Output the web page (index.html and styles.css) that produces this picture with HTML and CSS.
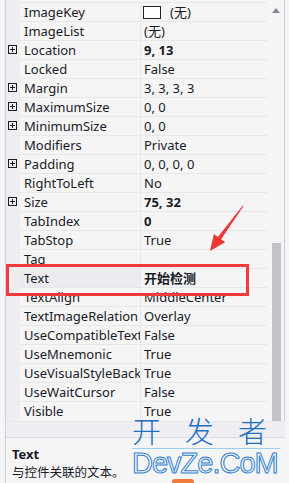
FILE: index.html
```html
<!DOCTYPE html>
<html>
<head>
	<title>属性</title>
	<link rel="stylesheet" href="styles.css">
</head>
<body>
	<div class="sheet">
		<div class="grid">
			<div class="rows">
				<div class="row"><span class="gut"></span><span class="name">ImageKey</span><span class="val"><i class="swatch"></i>(无)</span></div>
				<div class="row"><span class="gut"></span><span class="name">ImageList</span><span class="val">(无)</span></div>
				<div class="row"><span class="gut"><i class="plus"></i></span><span class="name">Location</span><span class="val bold">9, 13</span></div>
				<div class="row"><span class="gut"></span><span class="name">Locked</span><span class="val">False</span></div>
				<div class="row"><span class="gut"><i class="plus"></i></span><span class="name">Margin</span><span class="val">3, 3, 3, 3</span></div>
				<div class="row"><span class="gut"><i class="plus"></i></span><span class="name">MaximumSize</span><span class="val">0, 0</span></div>
				<div class="row"><span class="gut"><i class="plus"></i></span><span class="name">MinimumSize</span><span class="val">0, 0</span></div>
				<div class="row"><span class="gut"></span><span class="name">Modifiers</span><span class="val">Private</span></div>
				<div class="row"><span class="gut"><i class="plus"></i></span><span class="name">Padding</span><span class="val">0, 0, 0, 0</span></div>
				<div class="row"><span class="gut"></span><span class="name">RightToLeft</span><span class="val">No</span></div>
				<div class="row"><span class="gut"><i class="plus"></i></span><span class="name">Size</span><span class="val bold">75, 32</span></div>
				<div class="row"><span class="gut"></span><span class="name">TabIndex</span><span class="val bold">0</span></div>
				<div class="row"><span class="gut"></span><span class="name">TabStop</span><span class="val">True</span></div>
				<div class="row"><span class="gut"></span><span class="name">Tag</span><span class="val"></span></div>
				<div class="row selected"><span class="gut"></span><span class="name">Text</span><span class="val bold">开始检测</span></div>
				<div class="row"><span class="gut"></span><span class="name">TextAlign</span><span class="val">MiddleCenter</span></div>
				<div class="row"><span class="gut"></span><span class="name">TextImageRelation</span><span class="val">Overlay</span></div>
				<div class="row"><span class="gut"></span><span class="name">UseCompatibleTextRendering</span><span class="val">False</span></div>
				<div class="row"><span class="gut"></span><span class="name">UseMnemonic</span><span class="val">True</span></div>
				<div class="row"><span class="gut"></span><span class="name">UseVisualStyleBackColor</span><span class="val">True</span></div>
				<div class="row"><span class="gut"></span><span class="name">UseWaitCursor</span><span class="val">False</span></div>
				<div class="row"><span class="gut"></span><span class="name">Visible</span><span class="val">True</span></div>
			</div>
			<div class="scroll">
				<span class="up"></span>
				<span class="thumb"></span>
			</div>
		</div>
		<div class="split"></div>
		<div class="desc">
			<b>Text</b>
			<p>与控件关联的文本。</p>
		</div>
	</div>

	<!-- annotations drawn over the screenshot -->
	<div class="mark"></div>
	<svg class="arrow" width="289" height="483" viewBox="0 0 289 483">
		<polygon points="243.4,206.3 221.1,239.3 225.1,242.2 210,251 213.9,234 217.9,236.9 242.6,205.7" fill="#f03535"/>
	</svg>
	<div class="wm">
		<div class="wm-cn">开发者</div>
		<div class="wm-en">DevZe.CoM</div>
	</div>
	<span class="stub"></span>
</body>
</html>
```

FILE: styles.css
```css
body{
	margin: 0;
	background: #f5f5f7;
	font-family: "Noto Sans", "Noto Sans CJK SC", sans-serif;
	font-size: 13px;
	color: #1a1b29;
	width: 289px;
	height: 483px;
	overflow: hidden;
	position: relative;
}

.sheet{
	margin-left: 5px;
	width: 279px;
	border-left: 1px solid #cfd0dc;
}

.grid{
	display: flex;
	height: 421px;
}

.rows{
	width: 261px;
	padding-top: 2px;
	box-sizing: border-box;
	background: linear-gradient(to right, #ededf2 14px, #f5f5f5 14px);
	overflow: hidden;
}

.row{
	display: grid;
	grid-template-columns: 14px 121px 126px;
	height: 19px;
}

.gut{
	display: flex;
	align-items: center;
	padding-left: 2px;
}

.plus{
	width: 7px;
	height: 7px;
	border: 1px solid #1e1e1e;
	position: relative;
}
.plus::before{
	content: "";
	position: absolute;
	left: 1px;
	top: 3px;
	width: 5px;
	height: 1px;
	background: #1e1e1e;
}
.plus::after{
	content: "";
	position: absolute;
	left: 3px;
	top: 1px;
	width: 1px;
	height: 5px;
	background: #1e1e1e;
}

.name, .val{
	border-top: 1px solid #e7e7eb;
	line-height: 18px;
	white-space: nowrap;
	overflow: hidden;
}

.name{
	padding-left: 4px;
	border-right: 1px solid #e7e7eb;
}

.val{
	padding-left: 3px;
	display: flex;
	align-items: center;
}

.bold{
	font-weight: bold;
}

.selected .name{
	background: #ececf0;
}

.swatch{
	width: 18px;
	height: 13px;
	border: 1px solid #222;
	background: #fff;
	margin-right: 9px;
	box-sizing: border-box;
	margin-left: -1px;
}

.scroll{
	width: 17px;
	border-right: 1px solid #cdcdd8;
	display: flex;
	flex-direction: column;
	align-items: center;
}

.up{
	margin-top: 8px;
	margin-left: 1px;
	width: 0;
	height: 0;
	border-left: 4.5px solid transparent;
	border-right: 4.5px solid transparent;
	border-bottom: 5px solid #868999;
}

.thumb{
	margin-top: auto;
	margin-left: 1px;
	width: 9px;
	height: 178px;
	background: #c2c3c9;
}

.split{
	height: 15px;
	background: #efeff3;
	border-top: 1px solid #e7e7eb;
}

.desc{
	border-top: 1px solid #dcdce4;
	background: #f5f5f5;
	padding: 8px 0 0 6px;
	height: 46px;
}

.desc b{
	display: block;
	line-height: 16px;
}

.desc p{
	margin: 2px 0 0;
	line-height: 18px;
	font-size: 12.5px;
}

.mark{
	position: absolute;
	left: 6px;
	top: 264px;
	width: 243px;
	height: 32px;
	border: 3px solid #f43a3a;
	box-sizing: border-box;
}

.arrow{
	position: absolute;
	left: 0;
	top: 0;
}

.wm{
	position: absolute;
	left: 132px;
	top: 413px;
	width: 148px;
	color: #1f6fc0;
}

.wm-cn{
	font-family: "Noto Sans CJK SC", sans-serif;
	font-weight: 300;
	font-size: 29px;
	line-height: 34px;
	letter-spacing: 24px;
	white-space: nowrap;
	border-bottom: 1px solid #9ccff2;
	height: 35px;
}

.wm-en{
	font-family: "Liberation Sans", sans-serif;
	font-size: 29px;
	line-height: 28px;
	color: #f2f6fb;
	-webkit-text-stroke: 1px #2f7fcf;
	letter-spacing: -1px;
	white-space: nowrap;
}

.stub{
	position: absolute;
	left: 172px;
	top: 479px;
	width: 22px;
	height: 4px;
	background: #f07a3a;
	border-radius: 3px 3px 0 0;
}
```
